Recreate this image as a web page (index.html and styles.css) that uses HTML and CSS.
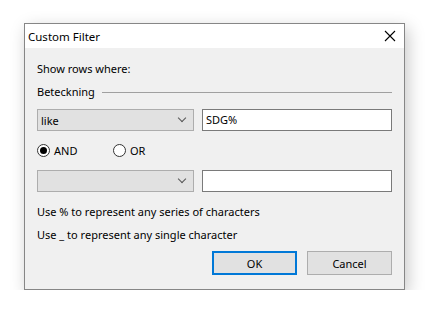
FILE: index.html
```html
<!DOCTYPE html>
<html lang="en">
<head>
    <title>Custom Filter</title>
    <meta charset="UTF-8">
    <link rel="stylesheet" href="styles.css">
</head>
<body>
<div class="window">
    <div class="titlebar">
        <span class="title">Custom Filter</span>
        <span class="close">
            <svg width="12" height="12" viewBox="0 0 12 12"><path d="M1 1 L11 11 M11 1 L1 11" stroke="#000" stroke-width="1.1" fill="none"/></svg>
        </span>
    </div>
    <div class="content">
        <p class="label show-rows">Show rows where:</p>
        <div class="group">
            <span class="label">Beteckning</span>
            <span class="group-line"></span>
        </div>
        <div class="row first-row">
            <div class="combo"><span>like</span><span class="chevron"></span></div>
            <div class="textbox">SDG%</div>
        </div>
        <div class="radios">
            <label class="radio checked"><span class="circle"></span>AND</label>
            <label class="radio"><span class="circle"></span>OR</label>
        </div>
        <div class="row">
            <div class="combo"><span></span><span class="chevron"></span></div>
            <div class="textbox"></div>
        </div>
        <p class="label hint">Use % to represent any series of characters</p>
        <p class="label hint2">Use _ to represent any single character</p>
        <div class="buttons">
            <button class="button default">OK</button>
            <button class="button">Cancel</button>
        </div>
    </div>
</div>
</body>
</html>
```

FILE: styles.css
```css
body {
    margin: 0;
    background-color: #ffffff;
    font-family: 'Noto Sans', sans-serif;
    font-size: 11px;
    color: #000000;
}
body * {
    font-family: 'Noto Sans', sans-serif;
    font-size: 11px;
}

.window {
    width: 379px;
    height: 265px;
    margin: 23px 0 0 24px;
    border: 1px solid #868686;
    background-color: #f0f0f0;
    box-shadow: 3px 5px 16px rgba(0, 0, 0, 0.22);
    display: flex;
    flex-direction: column;
}

.titlebar {
    height: 24px;
    background-color: #ffffff;
    display: flex;
    align-items: center;
    justify-content: space-between;
    padding: 0 8px 0 3px;
}
.titlebar .title {
    font-size: 11.5px;
}
.titlebar .close {
    display: flex;
    width: 12px;
    height: 12px;
}

.content {
    padding: 0 12px;
    display: flex;
    flex-direction: column;
}
.label {
    margin: 0;
    line-height: 16px;
    white-space: nowrap;
}
.show-rows {
    margin-top: 13px;
}

.group {
    margin-top: 7px;
    display: flex;
    align-items: center;
}
.group .group-line {
    flex: 1;
    height: 1px;
    background-color: #a0a0a0;
    margin-left: 7px;
}

.row {
    display: flex;
    gap: 8px;
    height: 22px;
}
.first-row {
    margin-top: 9px;
}
.combo {
    width: 157px;
    box-sizing: border-box;
    border: 1px solid #adadad;
    background-color: #e1e1e1;
    display: flex;
    align-items: center;
    justify-content: space-between;
    padding: 0 8px 0 3px;
}
.combo .chevron {
    width: 5px;
    height: 5px;
    border-right: 1px solid #555;
    border-bottom: 1px solid #555;
    transform: rotate(45deg);
    margin-top: -4px;
}
.textbox {
    flex: 1;
    box-sizing: border-box;
    border: 1px solid #7a7a7a;
    background-color: #ffffff;
    padding: 0 3px;
    line-height: 20px;
}

.radios {
    display: flex;
    height: 39px;
    align-items: center;
}
.radio {
    display: flex;
    align-items: center;
    gap: 4px;
}
.radio.checked {
    width: 76px;
}
.radio .circle {
    width: 11px;
    height: 11px;
    border: 1px solid #333333;
    border-radius: 50%;
    background-color: #ffffff;
    display: flex;
    align-items: center;
    justify-content: center;
}
.radio.checked .circle::after {
    content: '';
    width: 7px;
    height: 7px;
    border-radius: 50%;
    background-color: #000000;
}

.hint {
    margin-top: 12px;
}
.hint2 {
    margin-top: 7px;
}

.buttons {
    margin-top: 8px;
    display: flex;
    justify-content: flex-end;
    gap: 10px;
}
.button {
    width: 85px;
    height: 24px;
    border: 1px solid #adadad;
    background-color: #e1e1e1;
    color: #000000;
    padding: 0;
}
.button.default {
    border: 2px solid #0078d7;
}
```
